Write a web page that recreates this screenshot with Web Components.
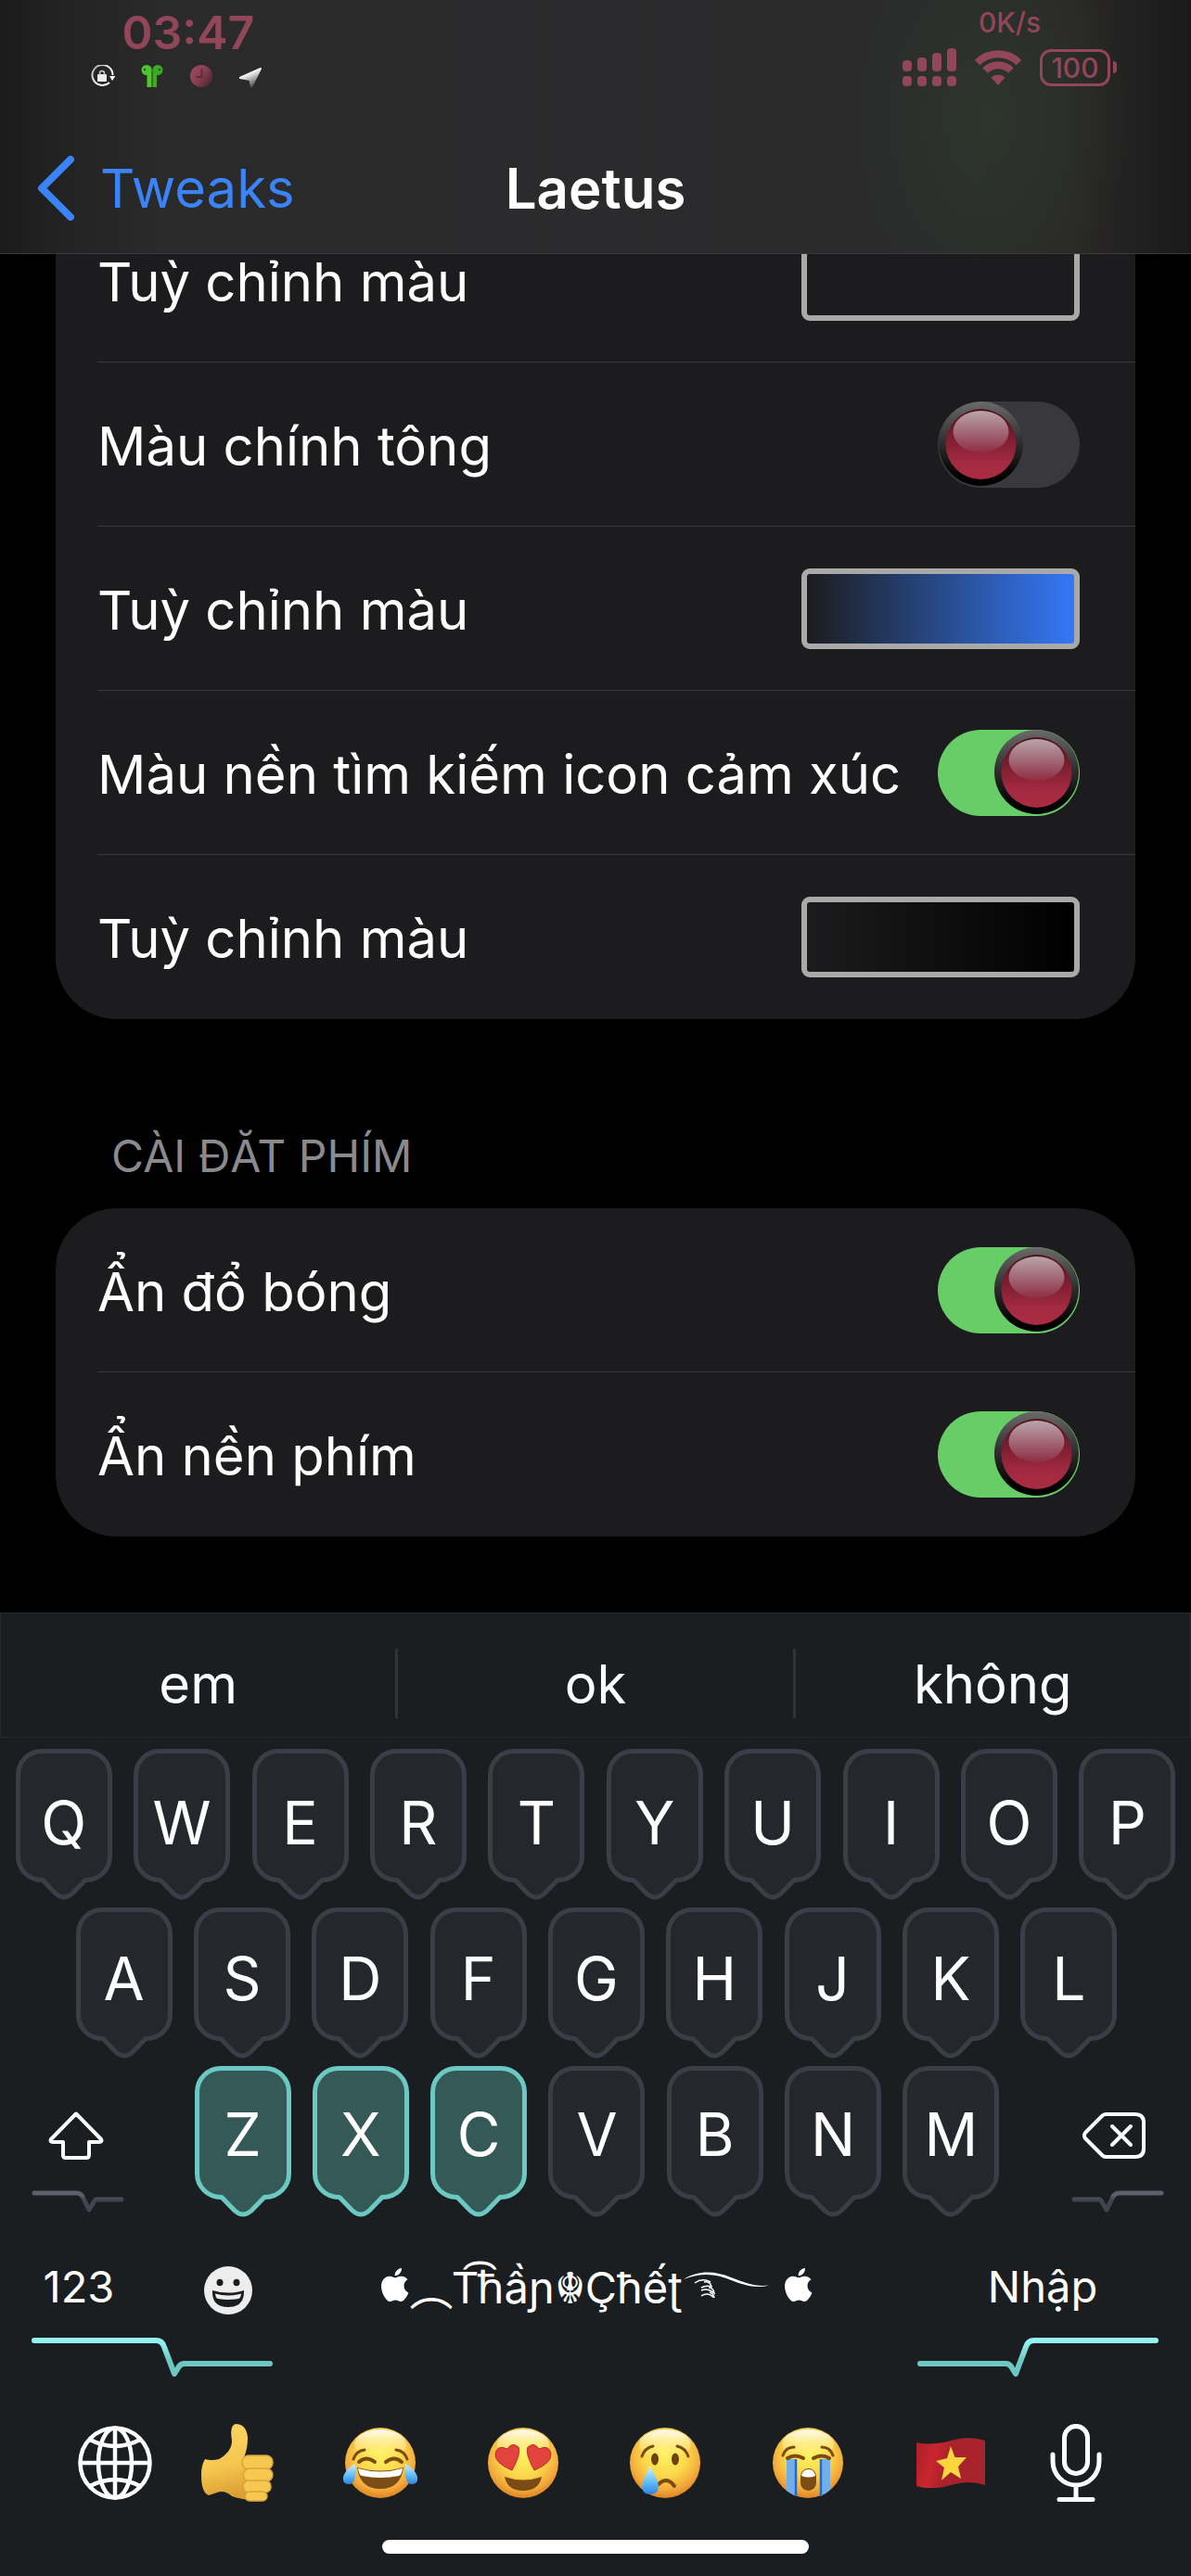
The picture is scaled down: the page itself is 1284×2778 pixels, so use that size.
<!DOCTYPE html>
<html lang="vi">
<head>
<meta charset="utf-8">
<meta name="viewport" content="width=device-width, initial-scale=1">
<title>Laetus</title>
<style>
  html, body { margin: 0; height: 100%; background: #000; }
  body {
    --blue: #3a84f8;
    --rose: #924659;
    --kb: #1a1e21;
    font-family: Inter, "Noto Sans", "Liberation Sans", sans-serif;
    color: #fff;
  }
</style>
</head>
<body>
<settings-screen></settings-screen>

<script>
const face = `
  <defs>
    <radialGradient id="f" cx=".5" cy=".38" r=".62">
      <stop offset="0" stop-color="#fdf160"/><stop offset=".5" stop-color="#fbd84b"/>
      <stop offset=".82" stop-color="#f3a93a"/><stop offset="1" stop-color="#dd8427"/>
    </radialGradient>
    <linearGradient id="h" x1="0" y1="0" x2="0" y2="1">
      <stop offset="0" stop-color="#fff" stop-opacity=".95"/><stop offset="1" stop-color="#fff27a" stop-opacity="0"/>
    </linearGradient>
    <linearGradient id="t" x1="0" y1="0" x2="0" y2="1">
      <stop offset="0" stop-color="#c9f1ff"/><stop offset=".6" stop-color="#5cb9f7"/><stop offset="1" stop-color="#3183dc"/>
    </linearGradient>
  </defs>
  <circle cx="41" cy="40" r="38" fill="url(#f)"/>
  <ellipse cx="41" cy="20" rx="28" ry="16" fill="url(#h)"/>`;

const ICONS = {
  back: [40, 70, `<path d="M36 4 5 35 36 66" fill="none" stroke="#3a84f8" stroke-width="8" stroke-linecap="round" stroke-linejoin="round"/>`],
  lock: [26, 24, `<defs><linearGradient id="g" x1="0" y1="0" x2="1" y2="1"><stop offset="0" stop-color="#aaa"/><stop offset=".6" stop-color="#fff"/></linearGradient></defs>
    <path d="M20 19A11 11 0 1 1 23.500 11" fill="none" stroke="url(#g)" stroke-width="2"/>
    <path d="M20 12h6.500l-3.500 5z" fill="#fff"/><rect x="7" y="10" width="10" height="8" rx="1" fill="#eee"/>
    <path d="M9.500 11V9a2.500 2.500 0 0 1 5 0v2" fill="none" stroke="#ccc" stroke-width="1.500"/>`],
  pods: [24, 24, `<g fill="#4fc62c"><circle cx="6" cy="5.500" r="5.500"/><path d="M3 8.500 11.500 4V24H6.500V11z"/><circle cx="18" cy="5.500" r="5.500" fill="#3fa824"/><path d="M21 8.500 12.500 5V24H17V11z" fill="#3fa824"/></g><circle cx="4" cy="5" r="1.200" fill="#1c5a10"/><circle cx="20" cy="5" r="1.200" fill="#1c5a10"/>`],
  clock: [26, 24, `<defs><linearGradient id="c" x1="0" y1="0" x2="1" y2=".7"><stop offset="0" stop-color="#a04a5e"/><stop offset=".5" stop-color="#8c4153"/><stop offset="1" stop-color="#552835"/></linearGradient></defs><circle cx="13" cy="12" r="12" fill="url(#c)"/><path d="M13.500 4.500V13H7.500" fill="none" stroke="#5c2a38" stroke-width="2"/>`],
  nav: [24, 24, `<defs><linearGradient id="n" x1="0" y1="0" x2=".5" y2="1"><stop offset=".35" stop-color="#fff"/><stop offset="1" stop-color="#555"/></linearGradient></defs><path d="M23 4 13 24 11.500 16 .5 14Z" fill="url(#n)" stroke="url(#n)" stroke-width="2" stroke-linejoin="round"/>`],
  signal: [58, 41, `<g fill="#924659"><rect y="13" width="10" height="12" rx="4"/><rect x="16" y="10" width="10" height="15" rx="4"/><rect x="32" y="5" width="10" height="20" rx="4"/><rect x="48" y="0" width="10" height="25" rx="4"/><rect y="30" width="10" height="11" rx="4"/><rect x="16" y="30" width="10" height="11" rx="4"/><rect x="32" y="30" width="10" height="11" rx="4"/><rect x="48" y="30" width="10" height="11" rx="4"/></g>`],
  wifi: [52, 38, `<g fill="none" stroke="#924659" stroke-width="8"><path d="M3.500 13.500a32 32 0 0 1 45 0"/><path d="M12 22a20 20 0 0 1 28 0"/></g><path d="M26 38 18.500 29.500a11 11 0 0 1 15 0Z" fill="#924659"/>`],
  shift: [60, 52, `<path d="M30 2.500 57 30q1.500 3-2 3H44V47q0 3-3 3H19q-3 0-3-3V33H5q-3.500 0-2-3Z" fill="none" stroke="#fff" stroke-width="4" stroke-linejoin="round"/>`],
  del: [68, 52, `<path d="M25 3H57q9 0 9 9V40q0 9-9 9H25q-2 0-4-2L3 29q-2-3 0-6L21 5q2-2 4-2Z" fill="none" stroke="#fff" stroke-width="4" stroke-linejoin="round"/><path d="M32 16 52 36M52 16 32 36" stroke="#fff" stroke-width="4" stroke-linecap="round"/>`],
  pulseS: [100, 24, `<defs><linearGradient id="p" x1="0" y1="0" x2="0" y2="1"><stop offset=".15" stop-color="#5c5f69"/><stop offset=".4" stop-color="#40444e"/></linearGradient></defs><path d="M3 3H48Q54 3 56 9L62 21 67 13Q68 10 71 10H97" fill="none" stroke="url(#p)" stroke-width="5" stroke-linecap="round" stroke-linejoin="round"/>`],
  pulseL: [260, 44, `<defs><linearGradient id="q" x1="0" y1="0" x2="0" y2="1"><stop offset=".05" stop-color="#93f3ee"/><stop offset=".6" stop-color="#6dc8c3"/></linearGradient></defs><path d="M3 3H134Q141 3 143 10L154 39 159 31Q161 28 165 28H257" fill="none" stroke="url(#q)" stroke-width="6" stroke-linecap="round" stroke-linejoin="round"/>`],
  smile: [54, 52, `<circle cx="27" cy="26" r="26" fill="#ededed"/><ellipse cx="18" cy="17.500" rx="3.500" ry="3.800" fill="#1a1e21"/><ellipse cx="36" cy="17.500" rx="3.500" ry="3.800" fill="#1a1e21"/><path d="M10 26q17 5 34 0q1 18-17 18T10 26Z" fill="#1a1e21"/><path d="M13 29.500q14 4 28 0q-.5 5-3 5.500q-11 2-22 0q-2.500-.5-3-5.500Z" fill="#ededed"/>`],
  apple: [30, 36, `<path transform="translate(-3.300) scale(1.500)" fill="#fff" d="M12.152 6.896c-.948 0-2.415-1.078-3.960-1.040-2.040.027-3.910 1.183-4.961 3.014-2.117 3.675-.546 9.103 1.519 12.090 1.013 1.454 2.208 3.090 3.792 3.039 1.520-.065 2.090-.987 3.935-.987 1.831 0 2.350.987 3.960.948 1.637-.026 2.676-1.480 3.676-2.948 1.156-1.688 1.636-3.325 1.662-3.415-.039-.013-3.182-1.221-3.220-4.857-.026-3.040 2.480-4.494 2.597-4.559-1.429-2.090-3.623-2.324-4.390-2.376-2-.156-3.675 1.090-4.610 1.090zM15.530 3.830c.843-1.012 1.400-2.427 1.245-3.830-1.207.052-2.662.805-3.532 1.818-.78.896-1.454 2.338-1.273 3.714 1.338.104 2.715-.688 3.559-1.701"/>`],
  flourish: [94, 28, `<path d="M1 8C18-2 34-1 52 6S78 16 93 14.500C78 18.500 66 14 51 8.500S22 0 1 8Z" fill="#fff"/><g fill="none" stroke="#fff" stroke-width="1.500"><path d="M13 12q8-6 17-1"/><path d="M23 11q7-1 8 5q-5-2-11 1"/><path d="M20 20q7-3 14 3q-1-6-6-6"/><path d="M20 26q7-5 14 2q-1-5-5-6"/></g>`],
  globe: [80, 80, `<g fill="none" stroke="#fff" stroke-width="4.500"><circle cx="40" cy="40" r="37.500"/><ellipse cx="40" cy="40" rx="18" ry="37.500"/><path d="M40 2V78M2 40H78M13 15Q40 29 67 15M13 65Q40 51 67 65"/></g>`],
  mic: [56, 84, `<g fill="none" stroke="#fff" stroke-width="5" stroke-linecap="round"><rect x="15.500" y="2.500" width="25" height="51" rx="12.500"/><path d="M3 33v7a25 26 0 0 0 50 0v-7M28 67V81M10 81.500H46"/></g>`],
  thumb: [80, 84, `<defs><linearGradient id="u" x1="0" y1="0" x2=".2" y2="1"><stop offset="0" stop-color="#fbd564"/><stop offset=".6" stop-color="#f6c750"/><stop offset="1" stop-color="#dc9f33"/></linearGradient></defs>
    <path d="M5 38Q12 40 20 38Q34 30 34 18Q31 0 39 0Q50 1 51 15Q51 27 47 36H66L68 80Q54 85 34 78Q26 71 18 74L9 77Q1 74 1 55Q1 44 5 38Z" fill="url(#u)"/>
    <g fill="#f6c850" stroke="#d9a23c" stroke-width="1.500"><rect x="45" y="34" width="33" height="15" rx="7"/><rect x="46" y="48" width="32" height="14" rx="7"/><rect x="46" y="61" width="30" height="13" rx="6"/><rect x="48" y="73" width="24" height="10" rx="5"/></g>`],
  laugh: [82, 80, face + `<g fill="none" stroke="#7c4b12" stroke-width="3" stroke-linecap="round"><path d="M12 36q3-9 12-10M70 36q-3-9-12-10"/><path d="M18 39q8-7 17 0M47 39q9-7 17 0" stroke-width="4"/></g>
    <path d="M16 45q25 7 50 0q-3 23-25 23T16 45Z" fill="#7c4c16"/><path d="M17 46q24 7 48 0q-1 7-4 8q-20 4-40 0q-3-1-4-8Z" fill="#fff"/>
    <path d="M14 41Q16 63 7 63Q0 63 1 55Q4 46 14 41ZM68 41Q66 63 75 63Q82 63 81 55Q78 46 68 41Z" fill="url(#t)"/>`],
  heart: [82, 80, face + `<g fill="#e2433c" stroke="#b92b25"><path d="M29 48Q10 40 11 30Q13 20 24 25Q29 17 36 23Q39 30 29 48Z"/><path d="M53 48Q72 40 71 30Q69 20 58 25Q53 17 46 23Q43 30 53 48Z"/></g><path d="M21 55q20 7 40 0q-3 15-20 15T21 55Z" fill="#7c4c16"/>`],
  cry: [82, 80, face + `<g fill="none" stroke="#7c4b12" stroke-width="3" stroke-linecap="round"><path d="M16 33q3-9 12-11M66 33q-3-9-12-11"/></g><ellipse cx="30" cy="36" rx="4" ry="6.500" fill="#6e410e"/><ellipse cx="52" cy="36" rx="4" ry="6.500" fill="#6e410e"/><path d="M34 63q9-9 17 2" fill="none" stroke="#7c4b12" stroke-width="4" stroke-linecap="round"/><path d="M25 44Q34 59 34 66Q33 74 25 74T16 66Q17 57 25 44Z" fill="url(#t)"/>`],
  sob: [82, 80, face + `<path d="M18 36H29V76Q23 74 18 70ZM54 36H65V69Q60 74 54 76Z" fill="#6fb0ec"/><path d="M28 36V76M55 36V76" stroke="#2e67c0" stroke-width="2.500"/>
    <g fill="none" stroke="#7c4b12" stroke-width="3" stroke-linecap="round"><path d="M14 32q3-9 12-9M68 32q-3-9-12-9"/><path d="M19 35q8-5 17 0M47 35q9-5 17 0" stroke-width="4"/></g><rect x="33" y="46" width="17" height="24" rx="8.500" fill="#7c4c16"/><path d="M34 54q1-7 7.500-7t7.500 7q-7 3-15 0Z" fill="#fff"/>`],
  flag: [76, 54, `<defs><linearGradient id="v" x1="0" y1="0" x2="1" y2=".2"><stop offset="0" stop-color="#a81f28"/><stop offset=".3" stop-color="#c9262f"/><stop offset=".55" stop-color="#a8222a"/><stop offset="1" stop-color="#a8242c"/></linearGradient></defs><path d="M1 5Q18 9 38 3T75 3V51Q58 45 38 51T1 52Z" fill="url(#v)"/><path d="M38 9 42.500 21 55 21 46 31 49 44 38 37 28 46 31 32 22 25 34 22Z" fill="#fbd63c"/>`]
};

/* Shared base: fills an open shadow root with the element's own markup. */
class Part extends HTMLElement {
  constructor() { super(); this.attachShadow({ mode: 'open' }); }
  connectedCallback() { this.shadowRoot.innerHTML = this.render(); }
}
const reset = `button{all:unset;box-sizing:border-box;cursor:pointer}`;

customElements.define('ui-icon', class extends Part {
  render() {
    const [w, h, body] = ICONS[this.getAttribute('name')];
    return `<style>:host{display:inline-block;flex:none;line-height:0}:host([flip]) svg{transform:scaleX(-1)}</style>
      <svg width="${w}" height="${h}" viewBox="0 0 ${w} ${h}" aria-hidden="true">${body}</svg>`;
  }
});

customElements.define('status-bar', class extends Part {
  render() {
    return `<style>
      :host{display:flex;justify-content:space-between;padding:0 80px 0 98px;color:var(--rose)}
      .left,.right,.row{display:flex}
      .left,.right{flex-direction:column;align-items:center}
      .time{font-size:50px;line-height:50px;font-weight:600;padding:10px 0 10px 26px}
      .left .row{gap:28px}
      .rate{font-size:30px;line-height:32px;font-weight:500;padding:8px 0 12px}
      .right .row{align-items:center;gap:19px}
      .battery{display:flex;align-items:center;gap:3px}
      .cell{border:3px solid;border-radius:12px;width:70px;height:34px;text-align:center;font-size:30px;line-height:34px;font-weight:500}
      .nub{width:4px;height:13px;border-radius:0 6px 6px 0;background:currentColor}
    </style>
    <div class="left"><time class="time">03:47</time>
      <div class="row"><ui-icon name="lock"></ui-icon><ui-icon name="pods"></ui-icon><ui-icon name="clock"></ui-icon><ui-icon name="nav"></ui-icon></div></div>
    <div class="right"><span class="rate">0K/s</span>
      <div class="row"><ui-icon name="signal"></ui-icon><ui-icon name="wifi"></ui-icon>
        <span class="battery"><span class="cell">100</span><span class="nub"></span></span></div></div>`;
  }
});

customElements.define('nav-header', class extends Part {
  render() {
    return `<style>
      :host{display:block;position:relative;z-index:1;border-bottom:1px solid #3c3c3e;
        background:radial-gradient(ellipse 150px 230px at 83% 130px,#2d352cff,#2d352c88 50%,#2d352c00),
        linear-gradient(90deg,#1b1b1b 0,#222223 60px,#2a2a2b 170px,#2b2b2d 50%,#2a2a2b 82%,#2a2827 90%,#1a1a1a 100%)}
      nav{display:grid;grid-template-columns:1fr auto 1fr;align-items:center;padding:0 40px;height:140px;margin-top:39px;font-size:58px;line-height:80px}
      a{display:flex;align-items:center;gap:28px;color:var(--blue);text-decoration:none}
      h1{margin:0;font-size:60px;font-weight:600}
      status-bar{height:94px}
    </style>
    <status-bar></status-bar>
    <nav><a href="#tweaks"><ui-icon name="back"></ui-icon><span>Tweaks</span></a><h1><slot></slot></h1></nav>`;
  }
});

customElements.define('settings-card', class extends Part {
  render() {
    return `<style>:host{display:flex;flex-direction:column;margin:0 60px;border-radius:66px;background:#1c1c1e;overflow:hidden}</style><slot></slot>`;
  }
});

const rowStyle = `
  :host{display:flex;height:177px;padding-left:45px}
  .row{flex:1;display:flex;align-items:center;justify-content:space-between;padding-right:60px;border-bottom:1px solid #39393b;font-size:58px;line-height:80px;white-space:nowrap}
  .name{padding-top:3px}
  :host(:last-child) .row{border-color:transparent}`;

customElements.define('switch-row', class extends Part {
  render() {
    const on = this.hasAttribute('on');
    return `<style>${rowStyle}
      label{cursor:pointer}
      .track{display:flex;flex:none;width:153px;height:93px;border-radius:47px;background:#39393d;overflow:hidden}
      .track.on{background:#67ce67;justify-content:flex-end}
      input{all:unset;width:0;height:0}
      svg{margin:0 1px}
    </style>
    <label class="row"><span class="name"><slot></slot></span>
      <span class="track ${on ? 'on' : ''}"><input type="checkbox" role="switch" ${on ? 'checked' : ''}>
      <svg width="91" height="91" viewBox="0 0 91 91" aria-hidden="true"><defs>
        <linearGradient id="rim" x1="0" y1="0" x2="0" y2="1"><stop offset="0" stop-color="#6a6a6a"/><stop offset=".5" stop-color="#2c2c2c"/><stop offset=".9" stop-color="#000"/></linearGradient>
        <linearGradient id="red" x1="0" y1="0" x2="0" y2="1"><stop offset="0" stop-color="#50101d"/><stop offset=".75" stop-color="#a22a41"/><stop offset="1" stop-color="#aa2b44"/></linearGradient>
        <linearGradient id="gl" x1="0" y1="0" x2="0" y2="1"><stop offset="0" stop-color="#b8a5ac"/><stop offset="1" stop-color="#8e2d43"/></linearGradient></defs>
        <circle cx="45.500" cy="45.500" r="45.500" fill="url(#rim)"/><circle cx="45.500" cy="46" r="38" fill="url(#red)"/><ellipse cx="45.500" cy="32.500" rx="30" ry="22.500" fill="url(#gl)"/></svg></span></label>`;
  }
  connectedCallback() {
    super.connectedCallback();
    const box = this.shadowRoot.querySelector('input');
    box.addEventListener('change', () => box.parentElement.classList.toggle('on', box.checked));
  }
});

customElements.define('color-row', class extends Part {
  render() {
    return `<style>${rowStyle}${reset}
      button{flex:none;width:300px;height:87px;border:6px solid #a9a9a9;border-radius:9px;
        background:linear-gradient(90deg,#1c1c1e,${this.getAttribute('to')})}
    </style>
    <div class="row"><span class="name" id="name"><slot></slot></span><button type="button" aria-labelledby="name"></button></div>`;
  }
});

customElements.define('kb-suggestions', class extends Part {
  render() {
    return `<style>${reset}
      :host{display:flex;align-items:center;height:133px;border:1px solid #26292b}
      button{flex:1;text-align:center;font-size:58px;line-height:80px;padding-top:18px}
      i{width:3px;height:75px;margin-top:17px;background:#303437}
    </style>
    ${this.getAttribute('words').split(' ').map(w => `<button type="button">${w}</button>`).join('<i></i>')}`;
  }
});

customElements.define('kb-key', class extends Part {
  render() {
    return `<style>${reset}
      :host{display:flex;flex:1;justify-content:center;--fill:#24282c;--edge:#3a3e47}
      :host([hot]){--fill:#355957;--edge:#6cc8c2}
      button{display:grid;width:104px;height:163px}
      svg,span{grid-area:1/1}
      span{text-align:center;font-size:64px;line-height:var(--letter-line);font-weight:400}
      path{fill:var(--fill);stroke:var(--edge);stroke-width:5;stroke-linejoin:round}
    </style>
    <button type="button"><svg width="104" height="163" viewBox="0 0 104 163" aria-hidden="true"><path d="M28 2.500H76A25.500 25.500 0 0 1 101.500 28V116A25.500 25.500 0 0 1 76 141.500H75L61 156Q52 164 43 156L29 141.500H28A25.500 25.500 0 0 1 2.500 116V28A25.500 25.500 0 0 1 28 2.500Z"/></svg><span><slot></slot></span></button>`;
  }
});

customElements.define('kb-side-key', class extends Part {
  render() {
    const right = this.hasAttribute('right');
    return `<style>${reset}
      :host{display:flex;flex:none;width:193px;justify-content:flex-start}
      :host([right]){justify-content:flex-end;width:190px}
      button{display:flex;flex-direction:column;align-items:flex-start;gap:33px;padding:49px 0 0;margin:0 24px 0 29px}
      ui-icon{display:block}
      .glyph{padding-left:${right ? 12 : 18}px}
    </style>
    <button type="button" aria-label="${right ? 'Xoá' : 'Shift'}"><ui-icon class="glyph" name="${right ? 'del' : 'shift'}"></ui-icon><ui-icon name="pulseS" ${right ? 'flip' : ''}></ui-icon></button>`;
  }
});

customElements.define('kb-board', class extends Part {
  render() {
    const keys = (s, hot = '') => [...s].map(k => `<kb-key ${hot.includes(k) ? 'hot' : ''}>${k}</kb-key>`).join('');
    const emoji = ['thumb', 'laugh', 'heart', 'cry', 'sob', 'flag'];
    return `<style>${reset}
      :host{display:block;background:var(--kb)}
      .keys{display:flex;flex-direction:column;gap:8px;padding:12px 5px 0}
      .keys div{display:flex}
      .top{--letter-line:160px}
      .keys .mid{padding:0 63px 0 65px;--letter-line:154px}
      .low{--letter-line:148px}
      .fn{display:flex;justify-content:space-between;padding:20px 35px 0 34px;font-size:47px;line-height:110px}
      .pair{display:flex;flex-direction:column;width:260px}
      .pair div{display:flex;justify-content:space-between;height:110px}
      .pair button{text-align:center;flex:none}
      .num{width:102px}.emo{width:96px}.enter{width:100%;padding-left:10px}
      .emo ui-icon{vertical-align:middle}
      .space{display:flex;align-items:center;height:110px;white-space:nowrap;padding-left:4px}
      .space ui-icon{margin-bottom:4px}
      .space ui-icon:last-child{margin-left:16px}
      .arch{font-family:"Noto Sans CJK JP",sans-serif}
      .tie{font-family:"Noto Sans",sans-serif}
      .dock{display:flex;align-items:center;height:85px;padding:48px 66px 0 69px}
      .dock button{display:flex;justify-content:center;flex:1}
      .dock .globe{flex:none;width:110px}.dock .mic{flex:none;width:116px}
      .home{width:460px;height:15px;border-radius:8px;background:#fff;margin:41px auto 0}
      .end{height:24px}
    </style>
    <kb-suggestions words="em ok không"></kb-suggestions>
    <div class="keys">
      <div class="top">${keys('QWERTYUIOP')}</div>
      <div class="mid">${keys('ASDFGHJKL')}</div>
      <div class="low"><kb-side-key></kb-side-key>${keys('ZXCVBNM', 'ZXC')}<kb-side-key right></kb-side-key></div>
    </div>
    <div class="fn">
      <div class="pair"><div><button class="num" type="button">123</button><button class="emo" type="button" aria-label="Emoji"><ui-icon name="smile"></ui-icon></button></div><ui-icon name="pulseL"></ui-icon></div>
      <button class="space" type="button"><ui-icon name="apple"></ui-icon><span class="arch">︵</span><span><span class="tie">T͡ħ</span>ầɲ☬Çħếʈ</span><ui-icon name="flourish"></ui-icon><ui-icon name="apple"></ui-icon></button>
      <div class="pair"><div><button class="enter" type="button">Nhập</button></div><ui-icon name="pulseL" flip></ui-icon></div>
    </div>
    <div class="dock"><button class="globe" type="button" aria-label="Bàn phím"><ui-icon name="globe"></ui-icon></button>
      ${emoji.map(n => `<button type="button" aria-label="${n}"><ui-icon name="${n}"></ui-icon></button>`).join('')}
      <button class="mic" type="button" aria-label="Micro"><ui-icon name="mic"></ui-icon></button></div>
    <div class="home"></div><div class="end"></div>`;
  }
});

customElements.define('settings-screen', class extends Part {
  render() {
    return `<style>
      :host{display:flex;flex-direction:column;min-height:100vh;background:#000}
      main{flex:1;overflow:hidden}
      .scrolled{margin-top:-60px}
      h2{margin:0;padding:118px 120px 26px;font-size:48px;line-height:60px;font-weight:400;color:#8a8a8e}
    </style>
    <nav-header>Laetus</nav-header>
    <main>
      <settings-card class="scrolled">
        <color-row to="#1c1c1e">Tuỳ chỉnh màu</color-row>
        <switch-row>Màu chính tông</switch-row>
        <color-row to="#3478f6">Tuỳ chỉnh màu</color-row>
        <switch-row on>Màu nền tìm kiếm icon cảm xúc</switch-row>
        <color-row to="#000">Tuỳ chỉnh màu</color-row>
      </settings-card>
      <h2>CÀI ĐĂT PHÍM</h2>
      <settings-card>
        <switch-row on>Ẩn đổ bóng</switch-row>
        <switch-row on>Ẩn nền phím</switch-row>
      </settings-card>
    </main>
    <kb-board></kb-board>`;
  }
});
</script>
</body>
</html>
